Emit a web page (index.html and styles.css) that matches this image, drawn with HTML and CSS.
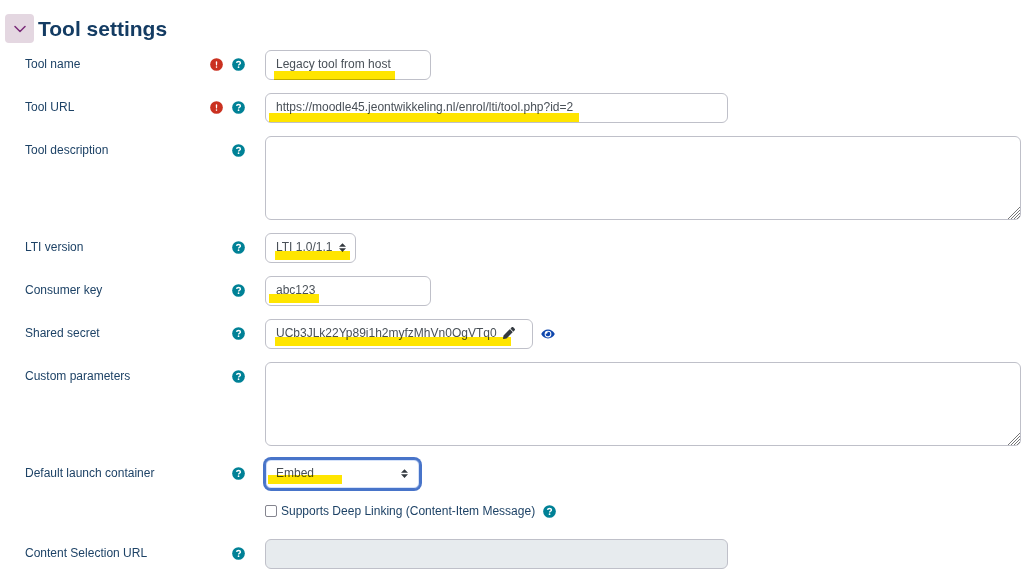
FILE: index.html
```html
<!DOCTYPE html>
<html lang="en">
<head>
<meta charset="utf-8">
<title>Tool settings</title>
<link rel="stylesheet" href="styles.css">
</head>
<body>
<svg class="defs" aria-hidden="true">
  <symbol id="required" viewBox="0 0 512 512"><circle cx="256" cy="256" r="250" fill="#ca3120"/><path d="M256 128c18 0 30 14 29 31l-7 120c-1 12-10 21-22 21s-21-9-22-21l-7-120c-1-17 11-31 29-31zM256 326a32 32 0 1 1 0 64 32 32 0 0 1 0-64z" fill="#fff"/></symbol>
  <symbol id="help" viewBox="0 0 512 512"><circle cx="256" cy="256" r="250" fill="#008196"/><path d="M180 194c4-40 36-58 76-58 44 0 76 22 76 60 0 50-72 50-72 98" fill="none" stroke="#fff" stroke-width="54"/><circle cx="258" cy="362" r="34" fill="#fff"/></symbol>
  <symbol id="sort" viewBox="0 0 8 10"><path d="M4 0 8 4.2H0zM4 10 0 5.8h8z" fill="#343a40"/></symbol>
  <symbol id="grip" viewBox="0 0 12 12"><path d="M0 12 12 0M3 12l9-9M6 12l6-6M9 12l3-3" fill="none" stroke="#777" stroke-width="1"/></symbol>
</svg>
<form class="settings">
  <header class="section-head">
    <button type="button" class="toggle" aria-label="Collapse Tool settings"><svg viewBox="0 0 12 8"><path d="M1 1.5 6 6.5l5-5" fill="none" stroke="#7a2a78" stroke-width="1.5" stroke-linecap="round" stroke-linejoin="round"/></svg></button>
    <h1 class="title">Tool settings</h1>
  </header>

  <div class="rows">
    <div class="row">
      <div class="caption"><label for="name">Tool name</label><span class="icons"><svg class="icon"><use href="#required"/></svg><button type="button" class="help" aria-label="Help with Tool name"><svg class="icon"><use href="#help"/></svg></button></span></div>
      <div class="field short"><input class="control" id="name" type="text" value="Legacy tool from host"><span class="mark mark-name"></span></div>
    </div>
    <div class="row">
      <div class="caption"><label for="url">Tool URL</label><span class="icons"><svg class="icon"><use href="#required"/></svg><button type="button" class="help" aria-label="Help with Tool URL"><svg class="icon"><use href="#help"/></svg></button></span></div>
      <div class="field long"><input class="control" id="url" type="text" value="https://moodle45.jeontwikkeling.nl/enrol/lti/tool.php?id=2"><span class="mark mark-url"></span></div>
    </div>
    <div class="row">
      <div class="caption"><label for="description">Tool description</label><span class="icons"><button type="button" class="help" aria-label="Help with Tool description"><svg class="icon"><use href="#help"/></svg></button></span></div>
      <div class="field"><textarea class="control area" id="description"></textarea><svg class="grip"><use href="#grip"/></svg></div>
    </div>
    <div class="row">
      <div class="caption"><label for="version">LTI version</label><span class="icons"><button type="button" class="help" aria-label="Help with LTI version"><svg class="icon"><use href="#help"/></svg></button></span></div>
      <div class="field version"><select class="control" id="version"><option>LTI 1.0/1.1</option></select><svg class="sort"><use href="#sort"/></svg><span class="mark mark-version"></span></div>
    </div>
    <div class="row">
      <div class="caption"><label for="key">Consumer key</label><span class="icons"><button type="button" class="help" aria-label="Help with Consumer key"><svg class="icon"><use href="#help"/></svg></button></span></div>
      <div class="field short"><input class="control" id="key" type="text" value="abc123"><span class="mark mark-key"></span></div>
    </div>
    <div class="row">
      <div class="caption"><label for="secret">Shared secret</label><span class="icons"><button type="button" class="help" aria-label="Help with Shared secret"><svg class="icon"><use href="#help"/></svg></button></span></div>
      <div class="inline">
        <div class="field secret"><input class="control" id="secret" type="text" value="UCb3JLk22Yp89i1h2myfzMhVn0OgVTq0"><span class="mark mark-secret"></span><button type="button" class="edit" aria-label="Edit"><svg viewBox="0 0 512 512"><path d="M498 142l-46 46c-5 5-13 5-17 0L324 77c-5-5-5-12 0-17l46-46c19-19 49-19 68 0l60 60c19 19 19 49 0 68zM284 100 22 362 0 484c-3 16 12 30 28 28l122-22 262-262c5-5 5-13 0-17L301 100c-4-5-12-5-17 0z" fill="#343a40"/></svg></button></div>
        <button type="button" class="reveal" aria-label="Reveal"><svg viewBox="0 0 576 512"><path d="M572 241C518 136 411 64 288 64S58 136 4 241a32 32 0 0 0 0 30c54 105 161 177 284 177s230-72 284-177a32 32 0 0 0 0-30zM288 400a144 144 0 1 1 0-288 144 144 0 0 1 0 288zm0-240a95 95 0 0 0-25 4 48 48 0 0 1-67 67 96 96 0 1 0 92-71z" fill="#0f47ad"/></svg></button>
      </div>
    </div>
    <div class="row">
      <div class="caption"><label for="params">Custom parameters</label><span class="icons"><button type="button" class="help" aria-label="Help with Custom parameters"><svg class="icon"><use href="#help"/></svg></button></span></div>
      <div class="field"><textarea class="control area" id="params"></textarea><svg class="grip"><use href="#grip"/></svg></div>
    </div>
    <div class="row">
      <div class="caption"><label for="container">Default launch container</label><span class="icons"><button type="button" class="help" aria-label="Help with Default launch container"><svg class="icon"><use href="#help"/></svg></button></span></div>
      <div class="field container"><select class="control active" id="container"><option>Embed</option></select><svg class="sort"><use href="#sort"/></svg><span class="mark mark-container"></span></div>
    </div>
    <div class="row">
      <div class="check"><input class="box" id="deep" type="checkbox"><label for="deep">Supports Deep Linking (Content-Item Message)</label><button type="button" class="help" aria-label="Help with Deep Linking"><svg class="icon"><use href="#help"/></svg></button></div>
    </div>
    <div class="row">
      <div class="caption"><label for="content">Content Selection URL</label><span class="icons"><button type="button" class="help" aria-label="Help with Content Selection URL"><svg class="icon"><use href="#help"/></svg></button></span></div>
      <div class="field long"><input class="control" id="content" type="text" disabled></div>
    </div>
  </div>
</form>
</body>
</html>
```
FILE: styles.css
```css
* { box-sizing: border-box; }
body {
  margin: 0;
  background: #fff;
  color: #1d4266;
  font: 12px/18px "Liberation Sans", Arial, sans-serif;
}
button { padding: 0; border: 0; background: none; cursor: pointer; }
svg { display: block; }
.defs { position: absolute; width: 0; height: 0; }
.settings { padding: 14px 3px 12px 5px; }
.section-head { display: flex; align-items: center; gap: 4px; }
.toggle {
  display: grid;
  place-items: center;
  width: 29px;
  height: 29px;
  border-radius: 4px;
  background: #e4d7e1;
}
.toggle svg { width: 12px; height: 8px; }
.title { margin: 0; color: #143c63; font-size: 21px; line-height: 29px; }
.rows { display: grid; gap: 13px; padding: 7px 0 0 20px; }
.row { display: grid; grid-template-columns: 240px minmax(0, 1fr); }
.caption {
  display: flex;
  justify-content: space-between;
  align-items: center;
  height: 28px;
  padding-right: 20px;
}
.icons { display: flex; gap: 9px; }
.icon { width: 13px; height: 13px; }
.field { position: relative; }
.short { max-width: 166px; }
.long { max-width: 463px; }
.version { max-width: 91px; }
.container { max-width: 155px; }
.secret { flex: 0 1 268px; }
.inline { display: flex; align-items: center; gap: 8px; }
.control {
  display: block;
  width: 100%;
  height: 30px;
  margin: 0;
  padding: 0 10px 2px;
  border: 1px solid #bfc0c9;
  border-radius: 6px;
  outline: 0;
  background: #fff;
  color: #495057;
  font: inherit;
  appearance: none;
}
.control:disabled { background: #e7ebee; }
.area { height: 84px; resize: none; }
.active {
  border-color: #4874c9;
  box-shadow: 0 0 0 2px #4874c9, inset 0 0 0 1px #d5e2fa;
}
.sort { position: absolute; top: 10px; right: 10px; width: 7px; height: 9px; }
.container .sort { right: 12px; }
.grip { position: absolute; right: 1px; bottom: 1px; width: 12px; height: 12px; }
.edit { position: absolute; top: 8px; right: 18px; }
.edit svg { width: 12px; height: 12px; }
.reveal svg { width: 14px; height: 12px; }
.mark {
  position: absolute;
  height: 9px;
  background: #ffe500;
  mix-blend-mode: multiply;
  pointer-events: none;
}
.mark-name { top: 21px; left: 9px; width: 121px; }
.mark-url { top: 20px; left: 4px; width: 310px; }
.mark-version { top: 18px; left: 10px; width: 75px; }
.mark-key { top: 18px; left: 4px; width: 50px; }
.mark-secret { top: 18px; left: 10px; width: 236px; }
.mark-container { top: 16px; left: 3px; width: 74px; }
.check {
  display: flex;
  grid-column: 2;
  align-items: center;
  height: 18px;
  margin-bottom: 6px;
}
.box {
  width: 12px;
  height: 12px;
  margin: 0 4px 0 0;
  border: 1px solid #85858f;
  border-radius: 2px;
  background: #fff;
  appearance: none;
}
.check .help { margin-left: 8px; }
```
